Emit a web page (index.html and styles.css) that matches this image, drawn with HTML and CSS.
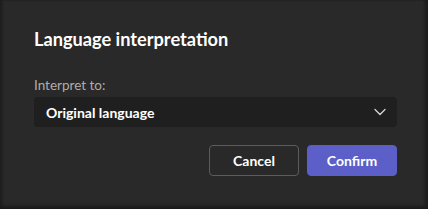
FILE: index.html
```html
<!DOCTYPE html>
<html>
<head>
<meta charset="utf-8">
<link rel="stylesheet" href="styles.css">
</head>
<body>
<div class="dialog">
  <h1 class="title">Language interpretation</h1>
  <div class="label">Interpret to:</div>
  <div class="select">
    <span class="select-text">Original language</span>
    <svg class="chevron" width="14" height="14" viewBox="0 0 14 14"><path d="M2 4.5 L7 9.5 L12 4.5" fill="none" stroke="#d6d6d6" stroke-width="1.3" stroke-linecap="round" stroke-linejoin="round"/></svg>
  </div>
  <div class="actions">
    <button class="btn btn-secondary">Cancel</button>
    <button class="btn btn-primary">Confirm</button>
  </div>
</div>
</body>
</html>
```
FILE: styles.css
```css
html, body {
  margin: 0;
  padding: 0;
  background: #1c1c1c;
  width: 428px;
  height: 209px;
  overflow: hidden;
}
.dialog {
  box-sizing: border-box;
  width: 428px;
  height: 209px;
  background: #292929;
  box-shadow: inset 3px 0 3px -1px #1c1c1c, inset -4px 0 3px -1px #1c1c1c, inset 0 -4px 3px -1px #1c1c1c;
  padding: 27px 31px 0 34px;
  font-family: Lato, "Open Sans", sans-serif;
  color: #ffffff;
}
.title {
  margin: 0;
  font-size: 18.2px;
  font-weight: 700;
  line-height: 24px;
}
.label {
  margin-top: 24px;
  font-size: 13.5px;
  line-height: 20px;
  color: #adadad;
}
.select {
  margin-top: 2px;
  height: 30px;
  background: #1f1f1f;
  border-radius: 4px;
  display: flex;
  align-items: center;
  justify-content: space-between;
  padding: 0 10px 0 12px;
}
.select-text {
  font-size: 14px;
  font-weight: 700;
  color: #ffffff;
}
.chevron {
  display: block;
}
.actions {
  margin-top: 18px;
  display: flex;
  justify-content: flex-end;
  gap: 8px;
}
.btn {
  box-sizing: border-box;
  width: 90px;
  height: 31px;
  border-radius: 4px;
  font-family: Lato, "Open Sans", sans-serif;
  font-size: 14px;
  font-weight: 700;
  color: #ffffff;
  padding: 0;
}
.btn-secondary {
  background: #292929;
  border: 1px solid #5c5c5c;
}
.btn-primary {
  background: #5b5fc7;
  border: 1px solid #5b5fc7;
}
```
